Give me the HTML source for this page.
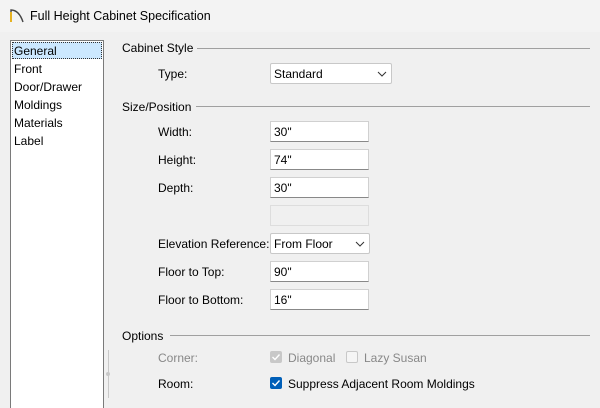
<!DOCTYPE html><html style="width:600px;height:408px;overflow:hidden"><head><style>
body{margin:0;width:600px;height:408px;background:#f0f0f0;font-family:"Liberation Sans",sans-serif;font-size:12px;color:#000;position:relative;overflow:hidden}
.a{position:absolute;white-space:nowrap}
.title{position:absolute;left:0;top:0;width:600px;height:32px;background:#f3f3f3}
.list{position:absolute;left:10px;top:40px;width:92px;height:380px;background:#fff;border:1px solid #7a7a7a}
.in{position:absolute;left:270px;width:99px;height:19px;background:#fff;border:1px solid #d0d0d0;border-bottom:1px solid #888;box-sizing:border-box;padding:3px 0 0 3px}
.dd{position:absolute;left:270px;height:21px;background:#fff;border:1px solid #c8c8c8;box-sizing:border-box;padding:3px 0 0 3px;border-radius:2px}
.line{position:absolute;height:1px;background:#a0a0a0}
.cb{position:absolute;width:12px;height:12px;box-sizing:border-box;border-radius:2px}
</style></head><body>
<div class="title"></div>
<svg class="a" style="left:9px;top:7px" width="16" height="16"><path d="M2 15V3Q10 3 14 15" fill="none" stroke="#444" stroke-width="1.4"/><path d="M2 5V15" stroke="#f5b400" stroke-width="1.6"/></svg>
<div class="a" style="left:30px;top:9px;font-size:12.5px">Full Height Cabinet Specification</div>
<div class="list">
<div class="a" style="left:1px;top:1px;width:90px;height:17px;background:#cce8ff;border:1px dotted #333;box-sizing:border-box"></div>
<div class="a" style="left:3px;top:3px">General</div>
<div class="a" style="left:3px;top:21px">Front</div>
<div class="a" style="left:3px;top:39px">Door/Drawer</div>
<div class="a" style="left:3px;top:57px">Moldings</div>
<div class="a" style="left:3px;top:75px">Materials</div>
<div class="a" style="left:3px;top:93px">Label</div>
</div>
<div class="a" style="left:122px;top:41px">Cabinet Style</div><div class="line" style="left:197px;top:48px;width:393px"></div>
<div class="a" style="left:158px;top:67px">Type:</div>
<div class="dd" style="top:63px;width:122px">Standard<svg class="a" style="left:106px;top:7px" width="10" height="6"><path d="M1 1l4 4 4-4" fill="none" stroke="#333"/></svg></div>
<div class="a" style="left:122px;top:100px">Size/Position</div><div class="line" style="left:196px;top:106px;width:394px"></div>
<div class="a" style="left:158px;top:125px">Width:</div><div class="in" style="top:121px;height:21px">30"</div>
<div class="a" style="left:158px;top:153px">Height:</div><div class="in" style="top:149px;height:21px">74"</div>
<div class="a" style="left:158px;top:181px">Depth:</div><div class="in" style="top:177px;height:21px">30"</div>
<div class="in" style="top:205px;height:21px;background:#f0f0f0;border-color:#ddd"></div>
<div class="a" style="left:158px;top:237px">Elevation Reference:</div>
<div class="dd" style="top:233px;width:100px">From Floor<svg class="a" style="left:84px;top:7px" width="10" height="6"><path d="M1 1l4 4 4-4" fill="none" stroke="#333"/></svg></div>
<div class="a" style="left:158px;top:265px">Floor to Top:</div><div class="in" style="top:261px;height:21px">90"</div>
<div class="a" style="left:158px;top:293px">Floor to Bottom:</div><div class="in" style="top:289px;height:21px">16"</div>
<div class="a" style="left:122px;top:329px">Options</div><div class="line" style="left:170px;top:335px;width:420px"></div>
<div class="a" style="left:108px;top:350px;width:1px;height:48px;background:#c8c8c8"></div>
<div class="a" style="left:106px;top:372px;width:4px;height:4px;border-radius:2px;background:#c8c8c8"></div>
<div class="a" style="left:158px;top:351px;color:#888">Corner:</div>
<div class="cb" style="left:270px;top:351px;background:#c8c8c8"><svg width="12" height="12" style="position:absolute;left:0;top:0"><path d="M2.5 6l2.5 2.5 4.5-5" fill="none" stroke="#fff" stroke-width="1.4"/></svg></div>
<div class="a" style="left:288px;top:351px;color:#888">Diagonal</div>
<div class="cb" style="left:346px;top:351px;border:1px solid #c8c8c8;background:#f5f5f5"></div>
<div class="a" style="left:364px;top:351px;color:#888">Lazy Susan</div>
<div class="a" style="left:158px;top:377px">Room:</div>
<div class="cb" style="left:270px;top:377px;background:#005fb8"><svg width="12" height="12" style="position:absolute;left:0;top:0"><path d="M2.5 6l2.5 2.5 4.5-5" fill="none" stroke="#fff" stroke-width="1.4"/></svg></div>
<div class="a" style="left:288px;top:377px">Suppress Adjacent Room Moldings</div>
</body></html>
